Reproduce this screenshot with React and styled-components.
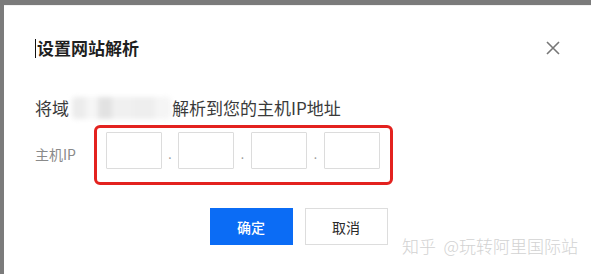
import styled, { createGlobalStyle } from "styled-components";

const GlobalStyle = createGlobalStyle`
  html, body {
    margin: 0;
    padding: 0;
    background: #7b7b7b;
    font-family: "Noto Sans CJK SC", "Liberation Sans", sans-serif;
  }
`;

const Backdrop = styled.div`
  width: 591px;
  height: 274px;
  padding: 5px 0 0 4px;
  box-sizing: border-box;
  background: #7b7b7b;
  overflow: hidden;
`;

const Dialog = styled.div`
  position: relative;
  height: 100%;
  background: #fff;
  padding: 31px 31px 0 31px;
  box-sizing: border-box;
  border-top: 1px solid #f2f2f2;
`;

const Header = styled.div`
  display: flex;
  align-items: center;
  justify-content: space-between;
  height: 24px;
  margin-top: -1px;
`;

const Title = styled.h2`
  display: flex;
  align-items: center;
  margin: 0;
  font-size: 17px;
  line-height: 24px;
  font-weight: 700;
  color: #1f1f1f;
`;

const Caret = styled.span`
  width: 1px;
  height: 19px;
  background: #111;
  margin-right: 1px;
`;

const Close = styled.button`
  display: flex;
  align-items: center;
  justify-content: center;
  width: 16px;
  height: 16px;
  padding: 0;
  margin-right: -1px;
  border: none;
  background: none;
  color: #777;
`;

const Desc = styled.p`
  margin: 36px 0 0;
  display: flex;
  align-items: center;
  font-size: 17px;
  line-height: 24px;
  color: #3a3a3a;
`;

const Blur = styled.span`
  display: inline-block;
  width: 99px;
  height: 22px;
  margin: 0 1px 0 3px;
  background:
    linear-gradient(90deg,
      #ececec 0 14%, #f6f6f6 14% 26%, #e2e2e2 26% 40%,
      #f0f0f0 40% 62%, #eeeeee 62% 84%, #f5f5f5 84% 100%);
  filter: blur(2.5px);
  border-radius: 4px;
`;

const FieldRow = styled.div`
  display: flex;
  align-items: center;
  margin-top: 5px;
`;

const Label = styled.span`
  width: 59px;
  font-size: 14px;
  line-height: 20px;
  color: #8a8a8a;
  margin-top: -3px;
`;

const Highlight = styled.div`
  display: flex;
  align-items: center;
  width: 299px;
  height: 60px;
  box-sizing: border-box;
  padding: 4px 9px 13px;
  border: 3px solid #e3221f;
  border-radius: 6px;
`;

const IpInput = styled.input`
  width: 56px;
  height: 37px;
  box-sizing: border-box;
  border: 1px solid #dcdcdc;
  border-radius: 1px;
  padding: 0 6px;
  font-size: 14px;
  outline: none;
`;

const Dot = styled.span`
  width: ${(p) => p.$w}px;
  text-align: center;
  font-size: 12px;
  line-height: 12px;
  color: #9a9a9a;
  padding-top: 6px;
`;

const Actions = styled.div`
  display: flex;
  justify-content: center;
  gap: 12px;
  margin-top: 23px;
  margin-left: 2px;
`;

const Button = styled.button`
  width: 83px;
  height: 37px;
  box-sizing: border-box;
  font-family: inherit;
  font-size: 14px;
  border-radius: 0;
  border: 1px solid ${(p) => (p.$primary ? "#0b6cf5" : "#dddddd")};
  background: ${(p) => (p.$primary ? "#0b6cf5" : "#fff")};
  color: ${(p) => (p.$primary ? "#fff" : "#2a2a2a")};
  font-weight: ${(p) => (p.$primary ? 500 : 400)};
`;

const Watermark = styled.span`
  position: absolute;
  right: 13px;
  top: 230px;
  font-size: 17px;
  line-height: 20px;
  font-weight: 300;
  color: #d2d2d2;
  white-space: pre;
`;

const App = () => {
  return (
    <>
      <GlobalStyle />
      <Backdrop>
        <Dialog>
          <Header>
            <Title>
              <Caret />
              设置网站解析
            </Title>
            <Close aria-label="关闭">
              <svg width="14" height="14" viewBox="0 0 14 14">
                <path
                  d="M1 1 L13 13 M13 1 L1 13"
                  stroke="currentColor"
                  strokeWidth="1.6"
                  fill="none"
                />
              </svg>
            </Close>
          </Header>
          <Desc>
            将域
            <Blur />
            解析到您的主机IP地址
          </Desc>
          <FieldRow>
            <Label>主机IP</Label>
            <Highlight>
              <IpInput />
              <Dot $w={16}>.</Dot>
              <IpInput />
              <Dot $w={17}>.</Dot>
              <IpInput />
              <Dot $w={17}>.</Dot>
              <IpInput />
            </Highlight>
          </FieldRow>
          <Actions>
            <Button $primary>确定</Button>
            <Button>取消</Button>
          </Actions>
          <Watermark>{"知乎  @玩转阿里国际站"}</Watermark>
        </Dialog>
      </Backdrop>
    </>
  );
};

export default App;
